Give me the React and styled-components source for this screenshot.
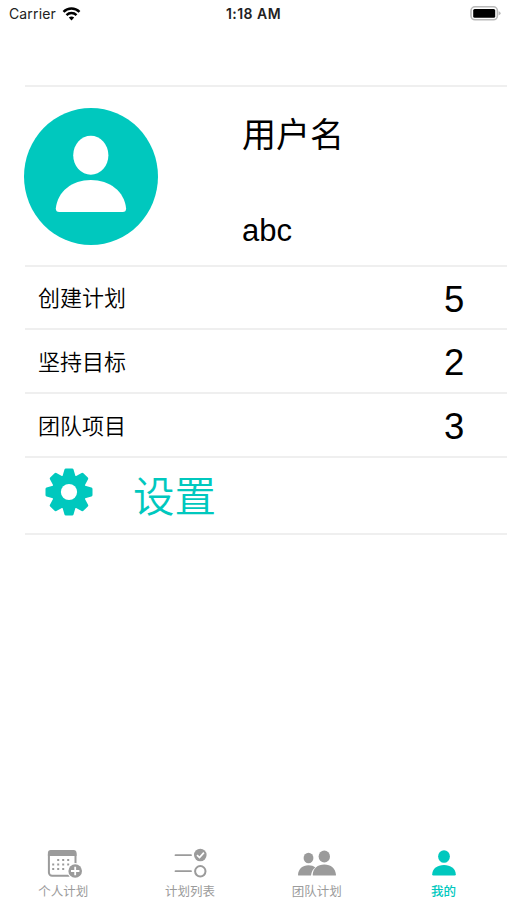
import React from "react";
import styled, { createGlobalStyle } from "styled-components";

const TEAL = "#00c8be";
const GREY = "#9b9b9b";
const LINE = "#efefef";

const GlobalStyle = createGlobalStyle`
  * { box-sizing: border-box; }
  body {
    margin: 0;
    background: #fff;
    color: #000;
    font-family: "Liberation Sans", "Noto Sans CJK SC", sans-serif;
  }
  svg { display: block; }
`;

const Screen = styled.div`
  width: 507px;
  height: 900px;
  display: flex;
  flex-direction: column;
  overflow: hidden;
  background: #fff;
`;

const StatusBar = styled.header`
  height: 28px;
  flex: none;
  display: grid;
  grid-template-columns: 1fr auto 1fr;
  align-items: center;
  padding: 0 6px 0 9px;
  font-family: Inter, sans-serif;
  font-size: 14px;
  line-height: 28px;
  color: #222;
`;

const Carrier = styled.div`
  display: flex;
  align-items: center;
  gap: 6px;
  letter-spacing: 0.14px;
`;

const Clock = styled.div`
  margin-right: 3px;
  font-weight: 600;
  font-size: 14px;
  letter-spacing: 0.45px;
`;

const BatterySlot = styled.div`
  display: flex;
  justify-content: flex-end;
`;

const List = styled.main`
  flex: 1;
  margin: 57px 0 0 25px;
  border-top: 2px solid ${LINE};
`;

const Row = styled.section`
  height: ${(p) => p.$height}px;
  display: flex;
  align-items: center;
  border-bottom: 2px solid ${LINE};
`;

const Profile = styled(Row)`
  align-items: flex-start;
  padding-top: 21px;
`;

const Avatar = styled.svg`
  margin-left: -1px;
  flex: none;
`;

const Identity = styled.div`
  margin-left: 83px;
  padding-top: 2px;
  display: flex;
  flex-direction: column;
`;

const NameTitle = styled.div`
  font-size: 34px;
  line-height: 50px;
`;

const NameValue = styled.div`
  margin-top: 53px;
  font-size: 31px;
  line-height: 36px;
`;

const Label = styled.div`
  flex: 1;
  padding: 3px 0 0 13px;
  font-size: 22px;
  line-height: 32px;
  font-weight: 350;
`;

const Count = styled.div`
  width: 63px;
  font-size: 36.5px;
  line-height: 42px;
  padding-top: 4px;
`;

const Settings = styled(Row)`
  color: ${TEAL};
  padding-left: 20px;
`;

const Gear = styled.svg`
  margin-bottom: 7px;
`;

const SettingsText = styled.div`
  margin-left: 40px;
  padding-top: 4px;
  font-size: 41.5px;
  line-height: 60px;
  font-weight: 350;
`;

const TabBar = styled.nav`
  height: 56px;
  flex: none;
  display: grid;
  grid-template-columns: repeat(4, 1fr);
`;

const Tab = styled.div`
  display: flex;
  flex-direction: column;
  align-items: center;
  gap: 2px;
  color: ${(p) => (p.$active ? TEAL : GREY)};
  font-size: 12.5px;
  font-weight: ${(p) => (p.$active ? 500 : 400)};
  line-height: 18px;
`;

const TabIcon = styled.svg`
  width: 40px;
  height: 37px;
`;

const stats = [
  { label: "创建计划", value: 5, height: 63 },
  { label: "坚持目标", value: 2, height: 64 },
  { label: "团队项目", value: 3, height: 64 },
];

const dots = [
  [14, 15], [19, 15], [24, 15],
  [9, 19.5], [14, 19.5], [19, 19.5], [24, 19.5],
  [9, 24], [14, 24], [19, 24],
];

function CalendarIcon() {
  return (
    <TabIcon viewBox="-0.7 0 40 37" fill="none">
      <rect x="5.2" y="7.2" width="26.6" height="24.6" rx="3.2" stroke="currentColor" strokeWidth="2" />
      <path d="M4.2 12V9q0-3 3-3h22.6q3 0 3 3v3Z" fill="currentColor" />
      {dots.map(([x, y]) => (
        <rect key={`${x}-${y}`} x={x - 0.5} y={y} width="2" height="2" fill="currentColor" />
      ))}
      <circle cx="31.5" cy="27" r="8" fill="#fff" />
      <circle cx="31.5" cy="27" r="6.8" fill="currentColor" />
      <path d="M31.5 22.8v8.4M27.3 27h8.4" stroke="#fff" strokeWidth="1.8" />
    </TabIcon>
  );
}

function ChecklistIcon() {
  return (
    <TabIcon viewBox="-0.5 0 40 37" fill="none" stroke="currentColor" strokeWidth="2">
      <path d="M5 11.2h15.5M5 27.2h15.5" strokeLinecap="round" strokeWidth="1.8" />
      <circle cx="29.8" cy="11" r="6.3" fill="currentColor" stroke="none" />
      <path d="m26.5 11.2 2.5 2.4 4.4-5" stroke="#fff" strokeWidth="1.7" />
      <circle cx="29.8" cy="27.3" r="5.2" />
    </TabIcon>
  );
}

function TeamIcon() {
  return (
    <TabIcon viewBox="0 0 40 37" fill="currentColor">
      <ellipse cx="11.5" cy="14" rx="4.9" ry="5.2" />
      <path d="M1 31c.3-6 4.5-9.7 10.4-9.7 3 0 5.2.8 6.9 2.2-2.5 1.8-3.8 4.2-4.3 8H2q-1 0-1-.5Z" />
      <ellipse cx="27.3" cy="12.5" rx="5.7" ry="6" />
      <path d="M15.7 31c.3-6.5 5-10.5 11.6-10.5S38.6 24.5 39 31q0 .5-1 .5H16.7q-1 0-1-.5Z" />
    </TabIcon>
  );
}

function PersonIcon() {
  return (
    <TabIcon viewBox="0 0 40 37" fill="currentColor">
      <ellipse cx="20" cy="12.5" rx="5.9" ry="6.3" />
      <path d="M8.2 30.2c.3-5.7 5.2-9.2 11.8-9.2s11.5 3.5 11.8 9.2q0 1.3-1.2 1.3H9.4q-1.2 0-1.2-1.3Z" />
    </TabIcon>
  );
}

const tabs = [
  { label: "个人计划", Icon: CalendarIcon },
  { label: "计划列表", Icon: ChecklistIcon },
  { label: "团队计划", Icon: TeamIcon },
  { label: "我的", Icon: PersonIcon, active: true },
];

const teeth = [0, 45, 90, 135, 180, 225, 270, 315];

export default function App() {
  return (
    <>
      <GlobalStyle />
      <Screen>
        <StatusBar>
          <Carrier>
            Carrier
            <svg width="19" height="14" viewBox="0 0 18 14" fill="none" stroke="#000" strokeWidth="2.5">
              <path d="M1 4.8a11.6 11.6 0 0 1 16 0M4 8.1a7.3 7.3 0 0 1 10 0" />
              <path d="M6.3 10.6a4.2 4.2 0 0 1 5.4 0L9 13.5Z" fill="#000" stroke="none" />
            </svg>
          </Carrier>
          <Clock>1:18 AM</Clock>
          <BatterySlot>
            <svg width="31" height="16" viewBox="0 0 31 16">
              <rect x="1" y="0.8" width="26.4" height="13" rx="4" fill="#fff" stroke="#b9b9b9" strokeWidth="1.6" />
              <rect x="3.2" y="3" width="22" height="8.8" rx="1.5" fill="#000" />
              <path d="M28.6 5.2q2 .6 2 2t-2 2Z" fill="#b9b9b9" />
            </svg>
          </BatterySlot>
        </StatusBar>

        <List>
          <Profile $height={180}>
            <Avatar width="135" height="137" viewBox="0 0 135 137">
              <ellipse cx="67" cy="68.5" rx="67" ry="68.5" fill={TEAL} />
              <ellipse cx="66.8" cy="47.3" rx="17.6" ry="19.5" fill="#fff" />
              <path d="M31.8 100.5C33.5 83.5 48 72 66.8 72s33.8 11.5 35.3 28.5q0 3.5-3.5 3.5H35.3q-3.5 0-3.5-3.5Z" fill="#fff" />
            </Avatar>
            <Identity>
              <NameTitle>用户名</NameTitle>
              <NameValue>abc</NameValue>
            </Identity>
          </Profile>

          {stats.map(({ label, value, height }) => (
            <Row key={label} $height={height}>
              <Label>{label}</Label>
              <Count>{value}</Count>
            </Row>
          ))}

          <Settings $height={77}>
            <Gear width="48" height="48" viewBox="-24 -24 48 48">
              <g fill="currentColor" stroke="currentColor" strokeWidth="3" strokeLinejoin="round">
                <circle r="15.8" />
                {teeth.map((angle) => (
                  <path key={angle} d="M-5.4 -14 -3.1 -22H3.1L5.4 -14Z" transform={`rotate(${angle})`} />
                ))}
              </g>
              <circle r="8.1" fill="#fff" />
            </Gear>
            <SettingsText>设置</SettingsText>
          </Settings>
        </List>

        <TabBar>
          {tabs.map(({ label, Icon, active }) => (
            <Tab key={label} $active={active}>
              <Icon />
              {label}
            </Tab>
          ))}
        </TabBar>
      </Screen>
    </>
  );
}
